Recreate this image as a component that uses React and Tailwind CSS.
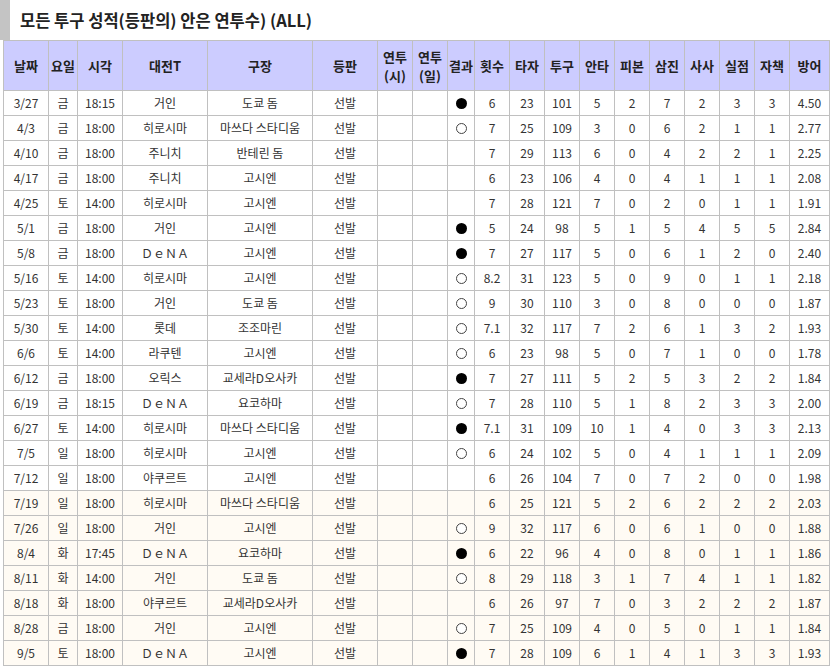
const rows = [
  ["3/27", "금", "18:15", "거인", "도쿄 돔", "선발", "", "", "W", "6", "23", "101", "5", "2", "7", "2", "3", "3", "4.50"],
  ["4/3", "금", "18:00", "히로시마", "마쓰다 스타디움", "선발", "", "", "L", "7", "25", "109", "3", "0", "6", "2", "1", "1", "2.77"],
  ["4/10", "금", "18:00", "주니치", "반테린 돔", "선발", "", "", "", "7", "29", "113", "6", "0", "4", "2", "2", "1", "2.25"],
  ["4/17", "금", "18:00", "주니치", "고시엔", "선발", "", "", "", "6", "23", "106", "4", "0", "4", "1", "1", "1", "2.08"],
  ["4/25", "토", "14:00", "히로시마", "고시엔", "선발", "", "", "", "7", "28", "121", "7", "0", "2", "0", "1", "1", "1.91"],
  ["5/1", "금", "18:00", "거인", "고시엔", "선발", "", "", "W", "5", "24", "98", "5", "1", "5", "4", "5", "5", "2.84"],
  ["5/8", "금", "18:00", "ＤｅＮＡ", "고시엔", "선발", "", "", "W", "7", "27", "117", "5", "0", "6", "1", "2", "0", "2.40"],
  ["5/16", "토", "14:00", "히로시마", "고시엔", "선발", "", "", "L", "8.2", "31", "123", "5", "0", "9", "0", "1", "1", "2.18"],
  ["5/23", "토", "18:00", "거인", "도쿄 돔", "선발", "", "", "L", "9", "30", "110", "3", "0", "8", "0", "0", "0", "1.87"],
  ["5/30", "토", "14:00", "롯데", "조조마린", "선발", "", "", "L", "7.1", "32", "117", "7", "2", "6", "1", "3", "2", "1.93"],
  ["6/6", "토", "14:00", "라쿠텐", "고시엔", "선발", "", "", "L", "6", "23", "98", "5", "0", "7", "1", "0", "0", "1.78"],
  ["6/12", "금", "18:00", "오릭스", "교세라D오사카", "선발", "", "", "W", "7", "27", "111", "5", "2", "5", "3", "2", "2", "1.84"],
  ["6/19", "금", "18:15", "ＤｅＮＡ", "요코하마", "선발", "", "", "L", "7", "28", "110", "5", "1", "8", "2", "3", "3", "2.00"],
  ["6/27", "토", "14:00", "히로시마", "마쓰다 스타디움", "선발", "", "", "W", "7.1", "31", "109", "10", "1", "4", "0", "3", "3", "2.13"],
  ["7/5", "일", "18:00", "히로시마", "고시엔", "선발", "", "", "L", "6", "24", "102", "5", "0", "4", "1", "1", "1", "2.09"],
  ["7/12", "일", "18:00", "야쿠르트", "고시엔", "선발", "", "", "", "6", "26", "104", "7", "0", "7", "2", "0", "0", "1.98"],
  ["7/19", "일", "18:00", "히로시마", "마쓰다 스타디움", "선발", "", "", "", "6", "25", "121", "5", "2", "6", "2", "2", "2", "2.03"],
  ["7/26", "일", "18:00", "거인", "고시엔", "선발", "", "", "L", "9", "32", "117", "6", "0", "6", "1", "0", "0", "1.88"],
  ["8/4", "화", "17:45", "ＤｅＮＡ", "요코하마", "선발", "", "", "W", "6", "22", "96", "4", "0", "8", "0", "1", "1", "1.86"],
  ["8/11", "화", "14:00", "거인", "도쿄 돔", "선발", "", "", "L", "8", "29", "118", "3", "1", "7", "4", "1", "1", "1.82"],
  ["8/18", "화", "18:00", "야쿠르트", "교세라D오사카", "선발", "", "", "", "6", "26", "97", "7", "0", "3", "2", "2", "2", "1.87"],
  ["8/28", "금", "18:00", "거인", "고시엔", "선발", "", "", "L", "7", "25", "109", "4", "0", "5", "0", "1", "1", "1.84"],
  ["9/5", "토", "18:00", "ＤｅＮＡ", "고시엔", "선발", "", "", "W", "7", "28", "109", "6", "1", "4", "1", "3", "3", "1.93"],
];

const headers = [
  "날짜", "요일", "시각", "대전T", "구장", "등판", ["연투", "(시)"], ["연투", "(일)"],
  "결과", "횟수", "타자", "투구", "안타", "피본", "삼진", "사사", "실점", "자책", "방어",
];

const widths = [45, 29, 45, 85, 105, 65, 35, 35, 27, 35, 35, 35, 35, 35, 35, 35, 35, 35, 40];

// W = filled circle, L = hollow circle
const Result = ({ r }) => {
  if (r === "W")
    return <span className="block mx-auto w-[11px] h-[11px] rounded-full bg-black" />;
  if (r === "L")
    return <span className="block mx-auto w-[11px] h-[11px] rounded-full border border-[#444] bg-white" />;
  return null;
};

export default function App() {
  return (
    <div
      className="bg-white w-[830px] h-[668px] overflow-hidden text-[#222]"
      style={{ fontFamily: '"Noto Sans CJK KR", "Noto Sans", sans-serif' }}
    >
      <div className="h-[40px] flex items-center border-l-[10px] border-[#c4c4c4] pl-[10px]">
        <h1 className="text-[16.5px] font-bold leading-none">모든 투구 성적(등판의) 안은 연투수) (ALL)</h1>
      </div>
      <table className="table-fixed border-collapse ml-[3px] w-[826px] text-[12px]">
        <colgroup>
          {widths.map((w, i) => (
            <col key={i} style={{ width: w }} />
          ))}
        </colgroup>
        <thead>
          <tr className="h-[50px] bg-[#ccccff]">
            {headers.map((h, i) => (
              <th
                key={i}
                className="border border-[#c0c0c0] font-bold text-[13px] text-center p-0 leading-[19px]"
              >
                {Array.isArray(h) ? (
                  <>
                    {h[0]}
                    <br />
                    {h[1]}
                  </>
                ) : (
                  h
                )}
              </th>
            ))}
          </tr>
        </thead>
        <tbody>
          {rows.map((row, ri) => (
            <tr key={ri} className={`h-[25px] ${ri >= 16 ? "bg-[#fffbf4]" : "bg-white"}`}>
              {row.map((c, ci) => (
                <td
                  key={ci}
                  className="border border-[#c0c0c0] text-center p-0 leading-none text-[#333] whitespace-nowrap"
                >
                  {ci === 8 ? <Result r={c} /> : c}
                </td>
              ))}
            </tr>
          ))}
        </tbody>
      </table>
    </div>
  );
}
